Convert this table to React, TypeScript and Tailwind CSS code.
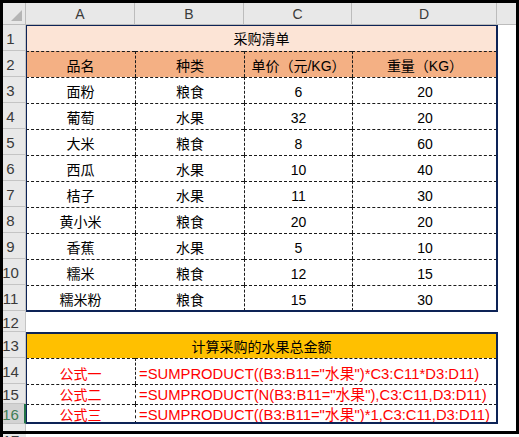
const font = "font-['Liberation_Sans','Noto_Sans_CJK_SC',sans-serif]";

const colHeads = [
  { label: 'A', w: 'w-[109px]' },
  { label: 'B', w: 'w-[109px]' },
  { label: 'C', w: 'w-[108px]' },
  { label: 'D', w: 'w-[145px]' },
];

const rowHeads = [
  { n: '1', h: 'h-[26px]' },
  { n: '2', h: 'h-[26px]' },
  { n: '3', h: 'h-[26px]' },
  { n: '4', h: 'h-[26px]' },
  { n: '5', h: 'h-[26px]' },
  { n: '6', h: 'h-[26px]' },
  { n: '7', h: 'h-[26px]' },
  { n: '8', h: 'h-[26px]' },
  { n: '9', h: 'h-[26px]' },
  { n: '10', h: 'h-[26px]' },
  { n: '11', h: 'h-[26px]' },
  { n: '12', h: 'h-[21px]' },
  { n: '13', h: 'h-[26px]' },
  { n: '14', h: 'h-[26px]' },
  { n: '15', h: 'h-[20px]' },
];

const items = [
  ['面粉', '粮食', '6', '20'],
  ['葡萄', '水果', '32', '20'],
  ['大米', '粮食', '8', '60'],
  ['西瓜', '水果', '10', '40'],
  ['桔子', '水果', '11', '30'],
  ['黄小米', '粮食', '20', '20'],
  ['香蕉', '水果', '5', '10'],
  ['糯米', '粮食', '12', '15'],
  ['糯米粉', '粮食', '15', '30'],
];

const formulas = [
  { name: '公式一', text: '=SUMPRODUCT((B3:B11="水果")*C3:C11*D3:D11)', h: 'h-[26px]', pt: 'pt-[4px]' },
  { name: '公式二', text: '=SUMPRODUCT(N(B3:B11="水果"),C3:C11,D3:D11)', h: 'h-[20px]', pt: 'pt-[1px]' },
  { name: '公式三', text: '=SUMPRODUCT((B3:B11="水果")*1,C3:C11,D3:D11)', h: 'h-[20px]', pt: 'pt-[1px]' },
];

const grid = 'grid grid-cols-[109px_109px_108px_145px]';
const dashT = 'border-t border-dashed border-[#1a1a1a]';
const dashL = 'border-l border-dashed border-[#1a1a1a]';

export default function App() {
  return (
    <div className={`h-[437px] w-[519px] overflow-hidden bg-white text-[14px] leading-[18px] text-black ${font}`}>
      <div className="flex h-[434px] flex-col overflow-hidden border-[3px] border-black">
        {/* column headers */}
        <div className="flex h-[22px] shrink-0 border-b border-[#bcbcbc] bg-[#e8e8e8] text-[#3a3a3a]">
          <div className="flex w-[23px] items-end justify-end border-r border-[#bcbcbc] pb-[3px] pr-[3px]">
            <svg width="11" height="11" viewBox="0 0 11 11">
              <polygon points="11,0 11,11 0,11" fill="#b5b5b5" />
            </svg>
          </div>
          {colHeads.map((c) => (
            <div key={c.label} className={`${c.w} flex items-center justify-center border-r border-[#bcbcbc] pt-px`}>
              {c.label}
            </div>
          ))}
          <div className="flex-1" />
        </div>

        <div className="flex min-h-0 flex-1">
          {/* row headers */}
          <div className="flex w-[23px] shrink-0 flex-col bg-[#e8e8e8] text-[15px] text-[#3a3a3a]">
            {rowHeads.map((r) => (
              <div
                key={r.n}
                className={`${r.h} flex shrink-0 items-center justify-center border-r border-b border-[#c4c4c4] pr-[7px] pt-[3px]`}
              >
                {r.n}
              </div>
            ))}
            <div className="flex h-[20px] shrink-0 items-center justify-center border-r-2 border-b border-r-[#217346] border-b-[#c4c4c4] bg-[#d3d3d3] pr-[6px] pt-[2px] text-[#3f7d55]">
              16
            </div>
            <div className="flex-1 border-r border-[#c4c4c4]" />
          </div>

          <div className="flex flex-1 flex-col">
            {/* purchase list */}
            <div className="relative w-[471px]">
              <div className="flex h-[26px] items-center justify-center bg-[#fce4d6] pt-[2px]">采购清单</div>
              <div className={`${grid} h-[26px] bg-[#f4b084]`}>
                {['品名', '种类', '单价（元/KG）', '重量（KG）'].map((t, i) => (
                  <div key={t} className={`flex items-center justify-center pt-[2px] ${dashT} ${i > 0 ? dashL : ''}`}>
                    {t}
                  </div>
                ))}
              </div>
              {items.map((row) => (
                <div key={row[0]} className={`${grid} h-[26px]`}>
                  {row.map((t, i) => (
                    <div key={i} className={`flex items-center justify-center pt-[3px] ${dashT} ${i > 0 ? dashL : ''}`}>
                      {t}
                    </div>
                  ))}
                </div>
              ))}
              <div className="pointer-events-none absolute left-0 top-0 -right-px -bottom-px border-t border-l border-r-2 border-b-2 border-[#0d2356]" />
            </div>

            <div className="h-[21px] shrink-0" />

            {/* formulas */}
            <div className="relative w-[471px]">
              <div className="flex h-[26px] items-center justify-center bg-[#ffc000] pt-[3px]">计算采购的水果总金额</div>
              {formulas.map((f) => (
                <div key={f.name} className={`${f.h} grid grid-cols-[109px_362px] overflow-hidden text-[#f00]`}>
                  <div className={`flex items-center justify-center ${f.pt} ${dashT}`}>{f.name}</div>
                  <div className={`flex items-center whitespace-nowrap pl-[3px] text-[14.8px] ${f.pt} ${dashT} ${dashL}`}>
                    {f.text}
                  </div>
                </div>
              ))}
              <div className="pointer-events-none absolute left-0 top-0 -right-px bottom-0 border-y-2 border-l border-r-2 border-[#0d2356]" />
            </div>
          </div>
        </div>
      </div>
      <div className="flex h-[3px]">
        <div className="w-[3px] bg-black" />
        <div className="flex w-[23px] items-start justify-center overflow-hidden bg-[#e8e8e8] pr-[7px] text-[15px] leading-[14px] text-[#3a3a3a]">
          17
        </div>
      </div>
    </div>
  );
}
